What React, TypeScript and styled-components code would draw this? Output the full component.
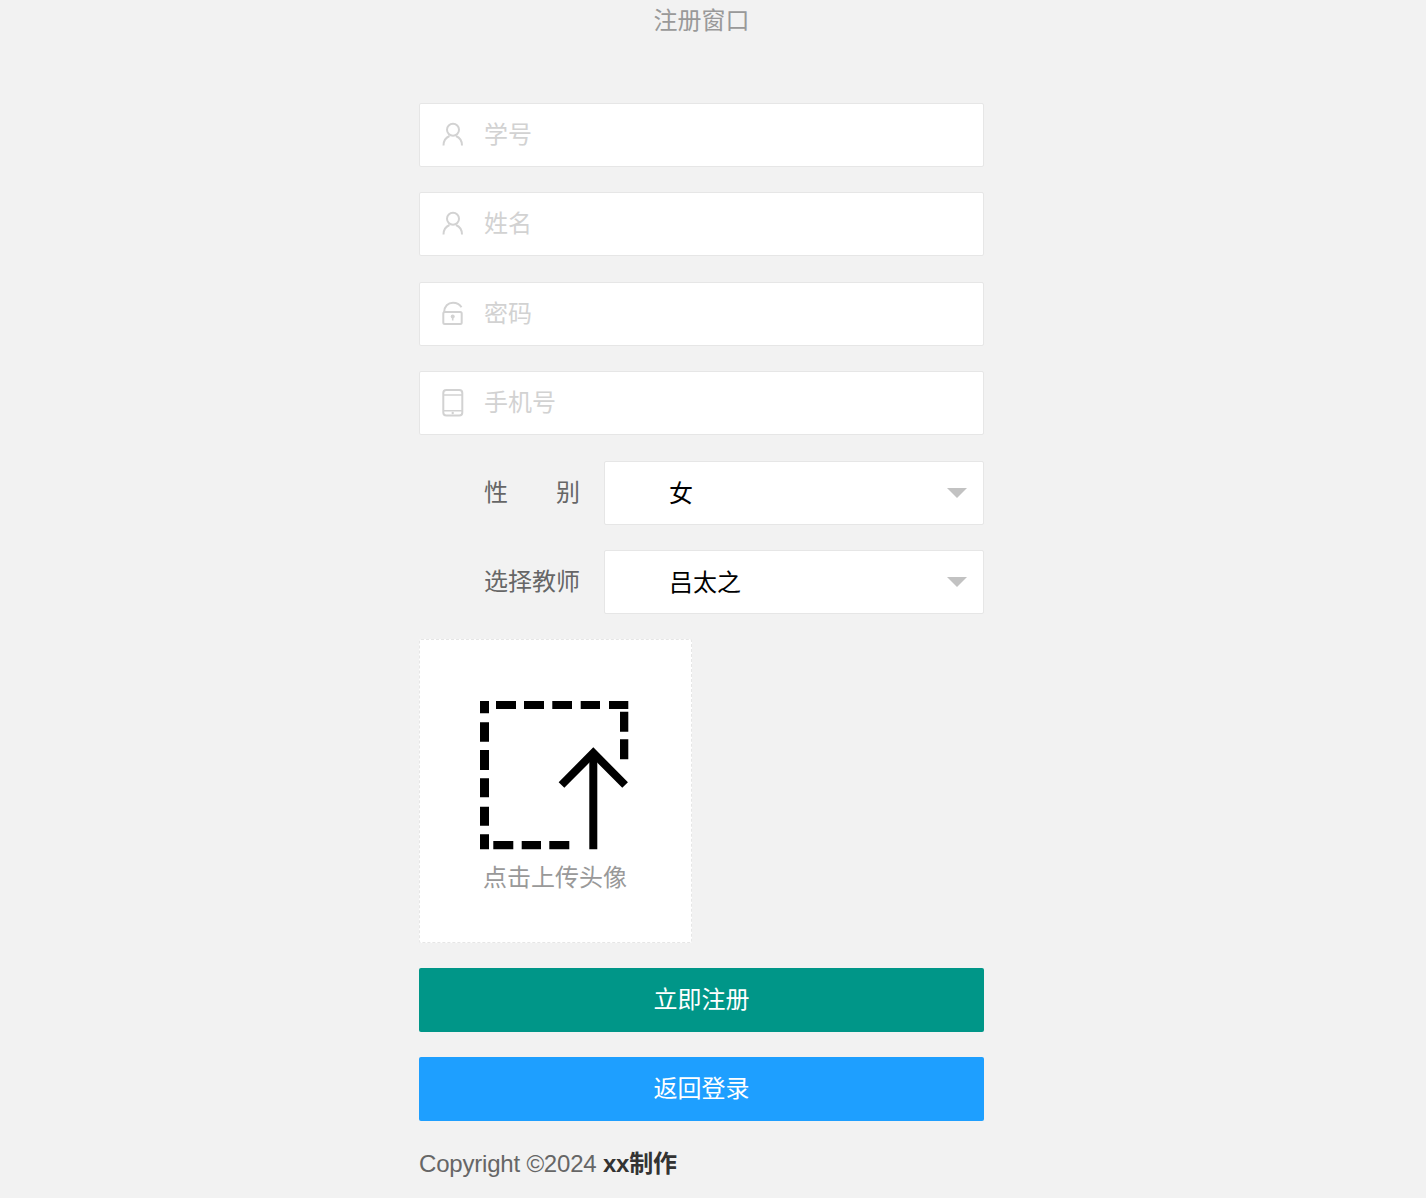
import React from "react";
import styled, { createGlobalStyle } from "styled-components";

const GlobalStyle = createGlobalStyle`
  html, body {
    margin: 0;
    padding: 0;
    background: #f2f2f2;
  }
  body {
    font-family: "Liberation Sans", "Noto Sans CJK SC", sans-serif;
    font-size: 24px;
    color: #666;
  }
`;

const Page = styled.div`
  width: 565px;
  height: 1198px;
  margin: 0 auto;
  padding-right: 23px;
  overflow: hidden;
`;

const Title = styled.h2`
  margin: 0 0 63px;
  height: 40px;
  line-height: 41px;
  font-size: 24px;
  font-weight: 400;
  text-align: center;
  color: #999;
`;

const Row = styled.div`
  margin-bottom: 25.4px;
`;

const InputWrap = styled.label`
  display: flex;
  align-items: center;
  height: 64px;
  box-sizing: border-box;
  background: #fff;
  border: 1px solid #e6e6e6;
  border-radius: 2px;
  padding-left: 21px;
`;

const FieldIcon = styled.svg`
  width: 24px;
  height: 26px;
  flex: none;
  margin-right: 19px;
  overflow: visible;
  color: #d2d2d2;
`;

const TextInput = styled.input`
  flex: 1;
  min-width: 0;
  height: 36px;
  border: 0;
  outline: 0;
  padding: 0;
  box-sizing: border-box;
  background: transparent;
  font: inherit;
  color: #333;

  &::placeholder {
    color: #d2d2d2;
    opacity: 1;
  }
`;

const SelectRow = styled(Row)`
  display: flex;
  align-items: center;
`;

const FieldLabel = styled.div`
  width: 185px;
  flex: none;
  box-sizing: border-box;
  padding-right: 24px;
  text-align: right;
  color: #666;
  line-height: 64px;
`;

const SelectBox = styled.div`
  flex: 1;
  height: 64px;
  box-sizing: border-box;
  display: flex;
  align-items: center;
  justify-content: space-between;
  background: #fff;
  border: 1px solid #e6e6e6;
  border-radius: 2px;
  padding: 0 16px 0 64px;
  color: #000;
`;

const SelectValue = styled.span`
  line-height: 58px;
  padding-top: 3px;
`;

const Caret = styled.i`
  width: 0;
  height: 0;
  border-style: solid;
  border-width: 10px 10px 0;
  border-color: #c2c2c2 transparent transparent;
`;

const Upload = styled.div`
  width: 273px;
  height: 304px;
  box-sizing: border-box;
  display: flex;
  flex-direction: column;
  align-items: center;
  padding: 61px 1px 0 0;
  background: #fff;
  border: 1px dashed #e6e6e6;
  border-radius: 2px;
  margin-bottom: 25px;
`;

const UploadGlyph = styled.svg`
  width: 150px;
  height: 150px;
  display: block;
`;

const UploadText = styled.span`
  line-height: 28px;
  margin-top: 13px;
  color: #999;
`;

const Button = styled.button<{ $bg: string }>`
  display: block;
  width: 100%;
  height: 64px;
  margin-bottom: 25px;
  border: 0;
  border-radius: 2px;
  padding: 0;
  background: ${(p) => p.$bg};
  color: #fff;
  font: inherit;
  line-height: 64px;
`;

const Footer = styled.p`
  margin: 0;
  padding-top: 4px;
  line-height: 28px;
  letter-spacing: -0.2px;
  color: #666;

  strong {
    color: #333;
  }
`;

const UserIcon = () => (
  <FieldIcon viewBox="0 0 24 26" fill="none" stroke="currentColor" strokeWidth="2">
    <circle cx="12" cy="7.700" r="6" />
    <path d="M2.500 23.500c0-4.500 2.500-8 6-9.500M21 23.500c0-4.500-2.500-8-6-9.500" />
  </FieldIcon>
);

const LockIcon = () => (
  <FieldIcon viewBox="0 0 24 26" fill="none" stroke="currentColor" strokeWidth="2">
    <rect x="2.300" y="11" width="18.400" height="12" rx="1.500" />
    <path d="M3.200 11C3.200 5.200 7 1.700 12 1.700c3.600 0 6.800 1.800 8.500 4.500" />
    <circle cx="11.700" cy="15.500" r="2" fill="currentColor" stroke="none" />
    <path d="M11.700 16v3.500" strokeWidth="1.600" />
  </FieldIcon>
);

const PhoneIcon = () => (
  <FieldIcon viewBox="0 0 24 26" fill="none" stroke="currentColor" strokeWidth="2">
    <rect x="2.300" y="0" width="19" height="25.500" rx="3" />
    <path d="M2.300 5h19M2.300 20.700h19" strokeWidth="1.500" />
    <circle cx="11.700" cy="23" r="1.200" fill="currentColor" stroke="none" />
  </FieldIcon>
);

const UploadIcon = () => (
  <UploadGlyph viewBox="0 0 150 150" fill="#000">
    <path d="M0 0h9v12.300H0zM16 0h20v8H16zM44 0h20v8H44zM72.300 0H92v8H72.300zM100.700 0H120v8h-19.300zM129 0h19.300v8H129z" />
    <path d="M140 10.700h8.300v20H140zM140 38.300h8.300v20H140z" />
    <path d="M0 21.300h9v19.400H0zM0 49h9v20H0zM0 77.300h9v19H0zM0 105.700h9v19H0zM0 133.300h9v15H0z" />
    <path d="M13.300 140h20v8.300h-20zM41.700 140H61v8.300H41.700zM69.300 140h20v8.300h-20z" />
    <path d="M113.300 148.300V54" stroke="#000" strokeWidth="8" fill="none" />
    <path d="M81.500 84l31.800-32 31.800 32" fill="none" stroke="#000" strokeWidth="8" />
  </UploadGlyph>
);

export default function App() {
  return (
    <>
      <GlobalStyle />
      <Page>
        <Title>注册窗口</Title>
        <form onSubmit={(e) => e.preventDefault()}>
          <Row>
            <InputWrap>
              <UserIcon />
              <TextInput placeholder="学号" />
            </InputWrap>
          </Row>
          <Row>
            <InputWrap>
              <UserIcon />
              <TextInput placeholder="姓名" />
            </InputWrap>
          </Row>
          <Row>
            <InputWrap>
              <LockIcon />
              <TextInput placeholder="密码" type="password" />
            </InputWrap>
          </Row>
          <Row>
            <InputWrap>
              <PhoneIcon />
              <TextInput placeholder="手机号" />
            </InputWrap>
          </Row>
          <SelectRow>
            <FieldLabel>性　　别</FieldLabel>
            <SelectBox>
              <SelectValue>女</SelectValue>
              <Caret />
            </SelectBox>
          </SelectRow>
          <SelectRow>
            <FieldLabel>选择教师</FieldLabel>
            <SelectBox>
              <SelectValue>吕太之</SelectValue>
              <Caret />
            </SelectBox>
          </SelectRow>
          <Upload>
            <UploadIcon />
            <UploadText>点击上传头像</UploadText>
          </Upload>
          <Button $bg="#009688">立即注册</Button>
          <Button $bg="#1e9fff">返回登录</Button>
        </form>
        <Footer>
          Copyright ©2024 <strong>xx制作</strong>
        </Footer>
      </Page>
    </>
  );
}
